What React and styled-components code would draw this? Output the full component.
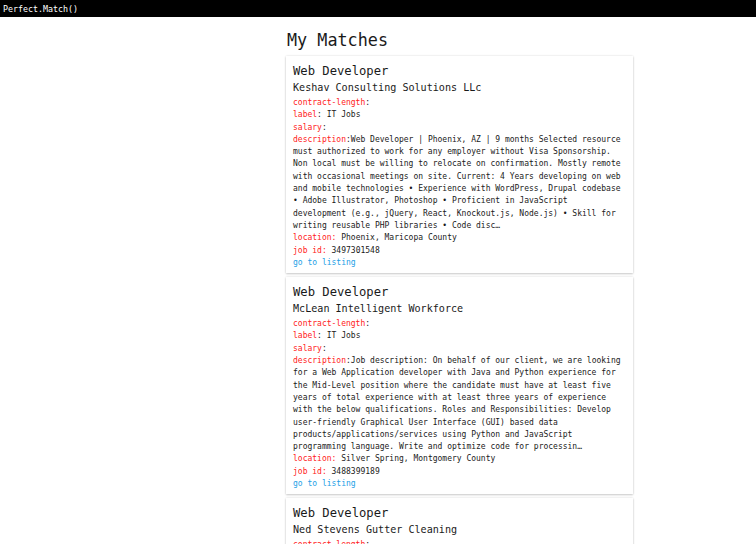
import React from "react";
import styled, { createGlobalStyle } from "styled-components";

const GlobalStyle = createGlobalStyle`
  body {
    margin: 0;
    background: #ffffff;
    font-family: "DejaVu Sans Mono", "Liberation Mono", monospace;
    color: #1a1a1a;
  }
`;

const NavBar = styled.header`
  height: 17px;
  background: #000000;
  color: #ffffff;
  display: flex;
  align-items: center;
  padding-left: 3px;
  font-size: 8.3px;
`;

const Main = styled.main`
  width: 347px;
  margin-left: 286px;
  display: flex;
  flex-direction: column;
  gap: 4px;
`;

const PageTitle = styled.h2`
  margin: 12px 0 0 1px;
  font-size: 16.8px;
  font-weight: normal;
  line-height: 23px;
`;

const Card = styled.div`
  background: #fff;
  padding: 7px 10px 4px 7px;
  box-shadow: 0 0 2px rgba(0, 0, 0, 0.12), 0 1px 2px rgba(0, 0, 0, 0.18);
`;

const JobTitle = styled.h3`
  margin: 0;
  font-size: 12.2px;
  font-weight: normal;
  line-height: 16px;
`;

const Company = styled.h4`
  margin: 1px 0 1px;
  font-size: 10.1px;
  font-weight: normal;
  line-height: 16px;
`;

const Field = styled.div`
  font-size: 8px;
  line-height: 12.3px;
`;

const Key = styled.span`
  color: #ff1a1a;
`;

const Link = styled.a`
  font-size: 8px;
  line-height: 12.3px;
  color: #1ea0e6;
  text-decoration: none;
  display: block;
`;

const jobs = [
  {
    title: "Web Developer",
    company: "Keshav Consulting Solutions LLc",
    label: "IT Jobs",
    description:
      "Web Developer | Phoenix, AZ | 9 months Selected resource must authorized to work for any employer without Visa Sponsorship. Non local must be willing to relocate on confirmation. Mostly remote with occasional meetings on site. Current: 4 Years developing on web and mobile technologies • Experience with WordPress, Drupal codebase • Adobe Illustrator, Photoshop • Proficient in JavaScript development (e.g., jQuery, React, Knockout.js, Node.js) • Skill for writing reusable PHP libraries • Code disc…",
    location: "Phoenix, Maricopa County",
    id: "3497301548",
  },
  {
    title: "Web Developer",
    company: "McLean Intelligent Workforce",
    label: "IT Jobs",
    description:
      "Job description: On behalf of our client, we are looking for a Web Application developer with Java and Python experience for the Mid-Level position where the candidate must have at least five years of total experience with at least three years of experience with the below qualifications. Roles and Responsibilities: Develop user-friendly Graphical User Interface (GUI) based data products/applications/services using Python and JavaScript programming language. Write and optimize code for processin…",
    location: "Silver Spring, Montgomery County",
    id: "3488399189",
  },
  {
    title: "Web Developer",
    company: "Ned Stevens Gutter Cleaning",
    label: "IT Jobs",
    description:
      "Web Developer needed to maintain and improve the company website and internal tools.",
    location: "Newark, Essex County",
    id: "3481102274",
  },
];

function JobCard({ job }) {
  return (
    <Card>
      <JobTitle>{job.title}</JobTitle>
      <Company>{job.company}</Company>
      <Field>
        <Key>contract-length</Key>:
      </Field>
      <Field>
        <Key>label</Key>: {job.label}
      </Field>
      <Field>
        <Key>salary</Key>:
      </Field>
      <Field>
        <Key>description</Key>:{job.description}
      </Field>
      <Field>
        <Key>location:</Key> {job.location}
      </Field>
      <Field>
        <Key>job id:</Key> {job.id}
      </Field>
      <Link href="#">go to listing</Link>
    </Card>
  );
}

export default function App() {
  return (
    <>
      <GlobalStyle />
      <NavBar>Perfect.Match()</NavBar>
      <Main>
        <PageTitle>My Matches</PageTitle>
        {jobs.map((job) => (
          <JobCard key={job.id} job={job} />
        ))}
      </Main>
    </>
  );
}
